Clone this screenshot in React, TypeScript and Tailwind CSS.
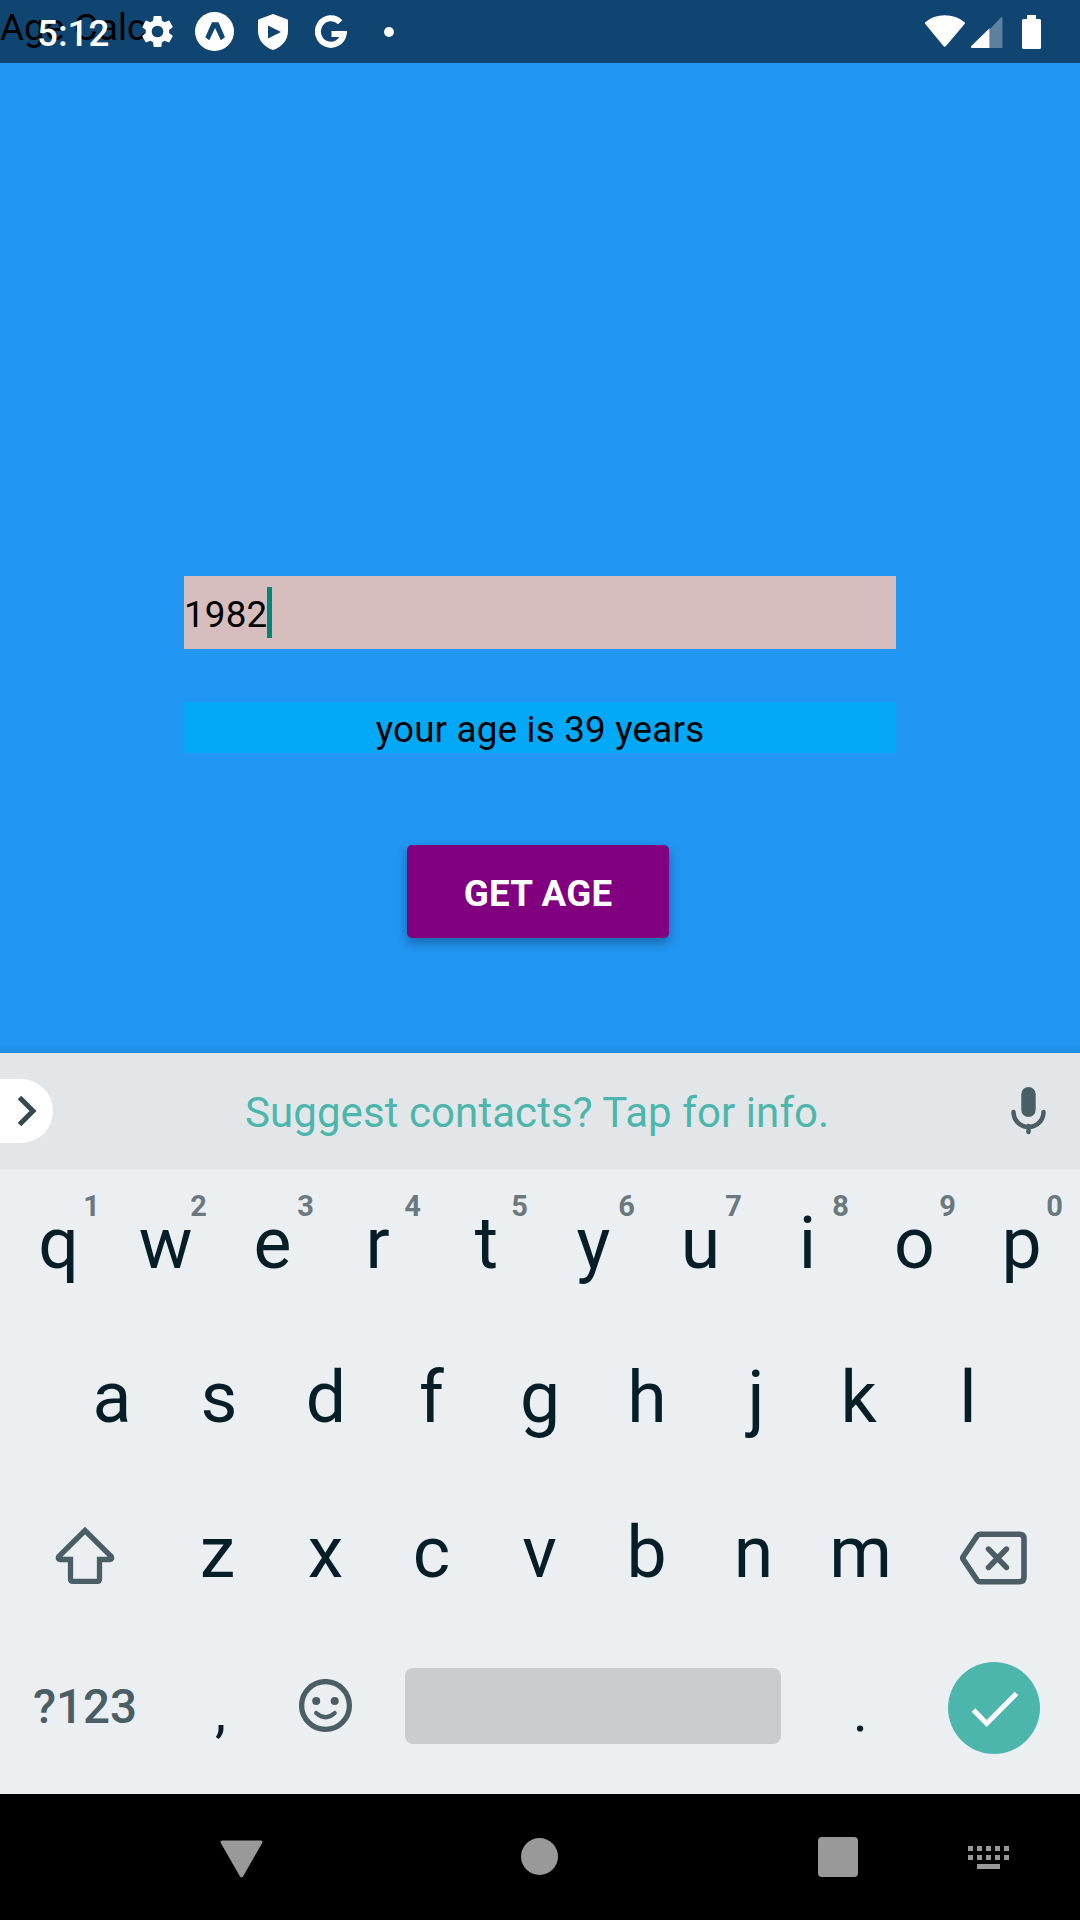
import React from "react";

const TOP_ROW = ["q", "w", "e", "r", "t", "y", "u", "i", "o", "p"];
const HOME_ROW = ["a", "s", "d", "f", "g", "h", "j", "k", "l"];
const BOTTOM_ROW = ["z", "x", "c", "v", "b", "n", "m"];

const NUDGE: Record<string, string> = {
  r: "pr-[4px]",
  f: "pr-[3px]",
  j: "pl-[4px]",
  k: "pr-[5px]",
  z: "pr-[2px]",
  c: "pr-[2px]",
};

function GearIcon() {
  return (
    <svg className="h-[39px] w-[39px]" viewBox="0 0 24 24" fill="white">
      <path d="M19.14 12.94c.04-.3.06-.61.06-.94s-.02-.64-.07-.94l2.03-1.58c.18-.14.23-.41.12-.61l-1.92-3.32c-.12-.22-.37-.29-.59-.22l-2.39.96c-.5-.38-1.03-.7-1.62-.94l-.36-2.54a.48.48 0 0 0-.48-.41h-3.84c-.24 0-.43.17-.47.41l-.36 2.54c-.59.24-1.13.57-1.62.94l-2.39-.96c-.22-.08-.47 0-.59.22L2.74 8.87c-.12.21-.08.47.12.61l2.03 1.58c-.05.3-.09.63-.09.94s.02.64.07.94l-2.03 1.58a.49.49 0 0 0-.12.61l1.92 3.32c.12.22.37.29.59.22l2.39-.96c.5.38 1.03.7 1.62.94l.36 2.54c.05.24.24.41.48.41h3.84c.24 0 .44-.17.47-.41l.36-2.54c.59-.24 1.13-.56 1.62-.94l2.39.96c.22.08.47 0 .59-.22l1.92-3.32a.49.49 0 0 0-.12-.61l-2.01-1.58zM12 15.6a3.6 3.6 0 1 1 0-7.2 3.6 3.6 0 0 1 0 7.2z" />
    </svg>
  );
}

function StatusBar() {
  return (
    <header className="relative h-[63px] shrink-0 bg-[#0f4570]">
      <div className="absolute left-0 top-[6px] text-[36.75px] leading-[43px] tracking-[0.15px] text-black">Age Calc</div>
      <div className="relative flex h-[63px] items-center pl-[37px] pr-[38px]">
        <span className="w-[101px] pt-[3px] text-[36.75px] font-medium leading-[43px] text-white">5:12</span>
        <GearIcon />
        <svg className="ml-[18px] h-[39px] w-[39px]" viewBox="0 0 39 39">
          <circle cx="19.5" cy="19.5" r="19.5" fill="white" />
          <path d="M17 10.200H23.500L30 25.200 25.800 28.300 20.100 16 14.300 28.300 10.300 25.200z" fill="#0f4570" />
        </svg>
        <svg className="ml-[24px] h-[36px] w-[30px]" viewBox="0 0 30 36">
          <path d="M15 0l14 5.200q1 .4 1 1.500V17c0 9-6 16-15 19C6 33 0 26 0 17V6.700q0-1.100 1-1.500z" fill="white" />
          <path d="M10 11.500l13 6.500L10 24.500z" fill="#0f4570" />
        </svg>
        <svg className="ml-[27px] h-[33px] w-[32px]" viewBox="0 0 32 33">
          <path d="M25.200 7.200A13 13.300 0 1 0 28.700 18.900H16.500" fill="none" stroke="white" strokeWidth="6" />
        </svg>
        <i className="ml-[37px] h-[10px] w-[10px] rounded-full bg-white" />
        <svg className="ml-auto h-[34px] w-[118px]" viewBox="0 0 118 34">
          <path d="M1.300 7.300Q9 .3 20.700.3T40.600 7.300q.8.700 0 1.700L22 31q-1.300 1.500-2.600 0L1.300 9q-.8-1 0-1.700z" fill="white" />
          <path d="M78.500 3.500V33h-13V14.500L76.300 3q2.200-2 2.200.5z" fill="white" fillOpacity=".32" />
          <path d="M65.500 13.200V33H48.500q-3-.2-1-2.300z" fill="white" />
          <path d="M103 0h9v4h3.500q1.500 0 1.500 1.500v27q0 1.500-1.500 1.500H99.500q-1.500 0-1.500-1.500v-27Q98 4 99.500 4h3.500z" fill="white" />
        </svg>
      </div>
    </header>
  );
}

function AgeForm() {
  return (
    <main className="relative flex h-[990px] shrink-0 flex-col items-center bg-[#2196f3] pt-[513px]">
      <div className="flex h-[73px] w-[712px] items-center bg-[#d6bebe]">
        <span className="w-[83px] pt-[4px] text-[36.75px] leading-[43px] tracking-[0.2px]">1982</span>
        <i className="h-[51px] w-[5px] bg-[#008577]" />
      </div>
      <div className="mt-[53px] h-[51px] w-[712px] bg-[#03a9f6] pt-[6px] text-center text-[36.75px] leading-[43px] tracking-[0.2px]">
        your age is 39 years
      </div>
      <button className="mr-[4px] mt-[92px] h-[93px] w-[262px] rounded-[5px] bg-[#800080] pt-[3px] text-[36.75px] font-bold leading-[43px] tracking-[0.2px] text-white shadow-[0_5px_12px_rgba(0,0,0,0.32)]">
        GET AGE
      </button>
      <div className="absolute bottom-0 left-0 h-[9px] w-full bg-linear-to-b from-transparent to-black/8" />
    </main>
  );
}

function SuggestionStrip() {
  return (
    <div className="flex h-[116px] shrink-0 items-center bg-[#e2e6e9]">
      <div className="mb-[1px] flex h-[64px] w-[53px] items-center rounded-r-full bg-white pl-[17px]">
        <svg className="h-[32px] w-[20px]" viewBox="0 0 20 32">
          <path d="M2.500 2.500L16 16 2.500 29.500" fill="none" stroke="#37474f" strokeWidth="5" />
        </svg>
      </div>
      <p className="ml-[192px] pt-[3px] text-[42px] leading-[50px] tracking-[0.08px] text-[#4db6ac]">
        Suggest contacts? Tap for info.
      </p>
      <svg className="ml-auto mr-[34px] h-[48px] w-[35px]" viewBox="0 0 35 48">
        <rect x="10.300" y="0" width="14.400" height="30" rx="7.200" fill="#4b5d65" />
        <path d="M2.500 25a15 15 0 0 0 30 0M17.500 39v6" fill="none" stroke="#4b5d65" strokeWidth="4.500" strokeLinecap="round" />
      </svg>
    </div>
  );
}

function Letter({ label, hint }: { label: string; hint?: string }) {
  return (
    <div className={`relative w-[107px] text-center ${NUDGE[label] ?? ""}`}>
      {label}
      {hint && (
        <sup className="absolute left-[70px] top-[20px] w-[33px] text-center text-[29px] font-bold leading-[35px] text-[#6b787e]">
          {hint}
        </sup>
      )}
    </div>
  );
}

function Keyboard() {
  return (
    <section className="h-[625px] shrink-0 bg-[#ebeff2] text-[71.5px] text-[#061e27]">
      <div className="flex h-[151px] justify-center leading-[150px]">
        {TOP_ROW.map((key, i) => (
          <Letter key={key} label={key} hint={String((i + 1) % 10)} />
        ))}
      </div>
      <div className="flex h-[155px] justify-center leading-[156px]">
        {HOME_ROW.map((key) => (
          <Letter key={key} label={key} />
        ))}
      </div>
      <div className="flex h-[155px] items-center leading-[156px]">
        <div className="flex w-[165px] justify-center pl-[5px]">
          <svg className="mt-[5px] h-[60px] w-[62px]" viewBox="0 0 62 60" fill="none" stroke="#4b5d65" strokeWidth="5.300">
            <path d="M31 5.500L4.700 31.500q-1.300 3 1.300 3H16.500V54q0 2.300 2.300 2.300h24.400q2.300 0 2.300-2.300V34.500H56q2.600 0 1.300-3z" />
          </svg>
        </div>
        {BOTTOM_ROW.map((key) => (
          <Letter key={key} label={key} />
        ))}
        <svg className="ml-[46px] mt-[11px] h-[54px] w-[67px]" viewBox="0 0 67 54" fill="none" stroke="#4b5d65" strokeWidth="5.400" strokeLinejoin="round">
          <path d="M20 3.200H59.500q4.500 0 4.500 4.500v38.600q0 4.500-4.500 4.500H20q-1.800 0-2.800-1.500L3.300 28.500q-1-1.500 0-3L17.200 4.700q1-1.500 2.800-1.500z" strokeWidth="5.600" />
          <path d="M28.500 18l18 18.500m0-18.500l-18 18.500" strokeLinecap="round" />
        </svg>
      </div>
      <div className="flex h-[164px] items-start">
        <div className="w-[165px] pl-[33px] pt-[49px] text-[47.500px] font-medium leading-[57px] text-[#4b5d65]">?123</div>
        <div className="w-[107px] pl-[4px] pt-[40px] text-center text-[56px] leading-[85px]">,</div>
        <svg className="ml-[27px] mt-[49px] h-[54px] w-[54px]" viewBox="0 0 54 54" fill="#4b5d65">
          <circle cx="26.500" cy="26.500" r="23.900" fill="none" stroke="#4b5d65" strokeWidth="5.300" />
          <circle cx="17.200" cy="22" r="4" />
          <circle cx="35.700" cy="22" r="4" />
          <path d="M17.200 34Q26.500 42.500 35.700 34" fill="none" stroke="#4b5d65" strokeWidth="4.200" strokeLinecap="round" />
        </svg>
        <div className="ml-[52px] mt-[38px] h-[76px] w-[376px] rounded-[8px] bg-[#c9cdd0]" />
        <div className="ml-[26px] w-[107px] pt-[40px] text-center text-[56px] leading-[85px]">.</div>
        <div className="ml-[34px] mt-[32px] h-[92px] w-[92px] rounded-full bg-[#4db6ac]">
          <svg className="h-[92px] w-[92px]" viewBox="0 0 92 92">
            <path d="M25.500 48L38.700 61.500 68.500 31.500" fill="none" stroke="white" strokeWidth="5" />
          </svg>
        </div>
      </div>
    </section>
  );
}

function NavigationBar() {
  return (
    <nav className="flex h-[126px] shrink-0 items-center bg-black pl-[220px]">
      <svg className="mt-[4px] h-[38px] w-[43px]" viewBox="0 0 43 38">
        <path d="M2 .5H41q2.300.3 1.200 2.500L23 36.500q-1.500 2-3 0L.8 3Q-.3.800 2 .500z" fill="#999" />
      </svg>
      <i className="mb-[1px] ml-[258px] h-[37px] w-[37px] rounded-full bg-[#999]" />
      <i className="ml-[260px] h-[40px] w-[40px] rounded-[4px] bg-[#999]" />
      <div className="ml-[110px] flex flex-col items-center gap-[4px]">
        {[0, 1].map((row) => (
          <div key={row} className="flex gap-[4px]">
            {[0, 1, 2, 3, 4].map((dot) => (
              <i key={dot} className="h-[5px] w-[5px] bg-[#999]" />
            ))}
          </div>
        ))}
        <i className="h-[5px] w-[23px] bg-[#999]" />
      </div>
    </nav>
  );
}

export default function App() {
  return (
    <div className="flex h-[1920px] w-[1080px] flex-col overflow-hidden font-['Roboto',sans-serif] text-black">
      <StatusBar />
      <AgeForm />
      <SuggestionStrip />
      <Keyboard />
      <NavigationBar />
    </div>
  );
}
